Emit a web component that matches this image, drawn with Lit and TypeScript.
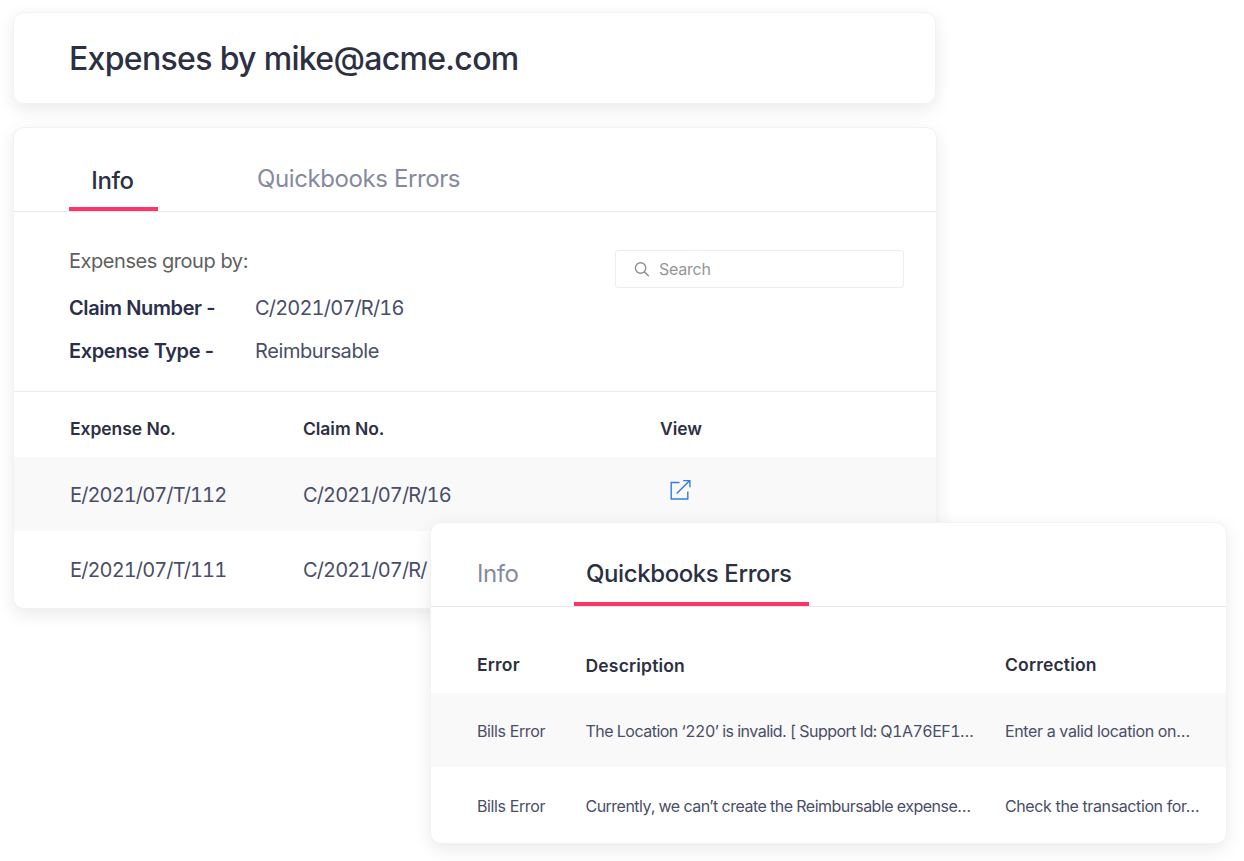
import { css, html, LitElement, svg } from "lit";
import { customElement, property } from "lit/decorators.js";
import { classMap } from "lit/directives/class-map.js";

interface Expense {
  expenseNo: string;
  claimNo: string;
}

interface BillError {
  error: string;
  description: string;
  correction: string;
}

const cardStyles = css`
  :host {
    display: block;
    box-sizing: border-box;
    background: #fff;
    border: 1px solid #f2f2f2;
    border-radius: 11px;
    box-shadow: 0 5px 18px rgba(0, 0, 0, 0.085);
    overflow: hidden;
  }

  .tabs {
    display: flex;
    box-sizing: border-box;
    height: 84px;
    border-bottom: 1px solid #e8e8ea;
  }

  .tab {
    box-sizing: border-box;
    height: 83px;
    font-size: 24px;
    line-height: 24px;
    font-weight: 400;
    letter-spacing: -0.4px;
    color: #858a9e;
    white-space: nowrap;
  }

  .tab.active {
    font-weight: 500;
    color: #2c3043;
    border-bottom: 4px solid #ff3366;
  }

  .row {
    display: grid;
    align-items: center;
    box-sizing: border-box;
    color: #494e68;
    white-space: nowrap;
  }

  .row.shaded {
    padding-top: 2px;
    background: #f9f9f9;
  }

  .row.head {
    font-size: 17.5px;
    font-weight: 600;
    color: #2c3043;
  }
`;

@customElement("expenses-card")
export class ExpensesCard extends LitElement {
  @property({ type: Array }) expenses: Expense[] = [];

  static styles = [
    cardStyles,
    css`
      .tab.info {
        width: 89px;
        margin-left: 55px;
        padding: 41px 2px 0 0;
        text-align: center;
      }

      .tab.errors {
        margin-left: 99px;
        padding-top: 39px;
      }

      .summary {
        display: flex;
        justify-content: space-between;
        box-sizing: border-box;
        height: 180px;
        padding: 38px 32px 0 55px;
        border-bottom: 1px solid #ececee;
      }

      .caption {
        font-size: 20px;
        line-height: 22px;
        letter-spacing: -0.45px;
        color: #5f5f5f;
      }

      .fields {
        display: grid;
        grid-template-columns: 186px auto;
        row-gap: 19px;
        margin-top: 24px;
        font-size: 20px;
        line-height: 24px;
        letter-spacing: -0.4px;
        white-space: nowrap;
      }

      .label {
        font-weight: 600;
        color: #2b2f4c;
      }

      .value {
        color: #494e68;
      }

      .value.code {
        font-variant-numeric: tabular-nums;
        letter-spacing: -0.82px;
      }

      .search {
        display: flex;
        align-items: center;
        box-sizing: border-box;
        width: 289px;
        height: 38px;
        padding-left: 18px;
        border: 1px solid #ededed;
        border-radius: 3px;
        font-size: 16px;
        letter-spacing: -0.25px;
        color: #959595;
      }

      .search svg {
        margin-right: 9px;
      }

      .row {
        grid-template-columns: 233px 357px auto;
        height: 74px;
        padding-left: 56px;
        font-size: 20px;
        font-variant-numeric: tabular-nums;
        letter-spacing: -0.88px;
      }

      .row.head {
        height: 65px;
        padding-top: 8px;
        font-variant-numeric: normal;
        letter-spacing: -0.05px;
      }

      .row.last {
        height: 77px;
      }

      .open {
        display: block;
        margin: -10px 0 0 8px;
      }
    `,
  ];

  render() {
    return html`
      <div class="tabs">
        <div class="tab info active">Info</div>
        <div class="tab errors">Quickbooks Errors</div>
      </div>
      <div class="summary">
        <div>
          <div class="caption">Expenses group by:</div>
          <div class="fields">
            <span class="label">Claim Number -</span>
            <span class="value code">C/2021/07/R/16</span>
            <span class="label">Expense Type -</span>
            <span class="value">Reimbursable</span>
          </div>
        </div>
        <div class="search">
          <svg width="16" height="16" viewBox="0 0 16 16" fill="none" stroke="#8f8f8f" stroke-width="1.4">
            <circle cx="6.6" cy="7" r="5.2" />
            <path d="M10.4 10.8L14.8 15.2" />
          </svg>
          <span>Search</span>
        </div>
      </div>
      <div class="row head">
        <span>Expense No.</span>
        <span>Claim No.</span>
        <span>View</span>
      </div>
      ${this.expenses.map(
        (expense, i) => html`
          <div class=${classMap({ row: true, shaded: i % 2 === 0, last: i === this.expenses.length - 1 })}>
            <span>${expense.expenseNo}</span>
            <span>${expense.claimNo}</span>
            <svg class="open" width="24" height="24" viewBox="0 0 24 24" fill="none" stroke="#2f7de6" stroke-width="1.4">
              ${svg`<path d="M11.5 4.5H3.2V21H19.8V13.6" /><path d="M8.7 15.4L21.8 2.6M15.2 2.6H21.9V9.2" />`}
            </svg>
          </div>
        `
      )}
    `;
  }
}

@customElement("errors-card")
export class ErrorsCard extends LitElement {
  @property({ type: Array }) errors: BillError[] = [];

  static styles = [
    cardStyles,
    css`
      .tab {
        padding-top: 39px;
      }

      .tab.info {
        width: 97px;
        margin-left: 46px;
      }

      .tab.errors {
        width: 235px;
        padding-left: 12px;
      }

      .row {
        grid-template-columns: 108.5px 419.5px auto;
        height: 74px;
        padding-left: 46px;
        font-size: 16px;
        letter-spacing: -0.39px;
      }

      .row.head {
        height: 86px;
        padding-top: 28px;
        letter-spacing: 0.18px;
      }

      .row.last {
        height: 77px;
      }

      .description {
        font-variant-numeric: tabular-nums;
        letter-spacing: -0.52px;
      }

      .row.head .description {
        padding-top: 2px;
        letter-spacing: 0.18px;
      }
    `,
  ];

  render() {
    return html`
      <div class="tabs">
        <div class="tab info">Info</div>
        <div class="tab errors active">Quickbooks Errors</div>
      </div>
      <div class="row head">
        <span>Error</span>
        <span class="description">Description</span>
        <span>Correction</span>
      </div>
      ${this.errors.map(
        (item, i) => html`
          <div class=${classMap({ row: true, shaded: i % 2 === 0, last: i === this.errors.length - 1 })}>
            <span>${item.error}</span>
            <span class="description">${item.description}</span>
            <span>${item.correction}</span>
          </div>
        `
      )}
    `;
  }
}

@customElement("app-root")
export class AppRoot extends LitElement {
  expenses: Expense[] = [
    { expenseNo: "E/2021/07/T/112", claimNo: "C/2021/07/R/16" },
    { expenseNo: "E/2021/07/T/111", claimNo: "C/2021/07/R/" },
  ];

  errors: BillError[] = [
    {
      error: "Bills Error",
      description: "The Location ‘220’ is invalid. [ Support Id: Q1A76EF1…",
      correction: "Enter a valid location on…",
    },
    {
      error: "Bills Error",
      description: "Currently, we can’t create the Reimbursable expense…",
      correction: "Check the transaction for…",
    },
  ];

  static styles = css`
    :host {
      display: block;
      position: relative;
      box-sizing: border-box;
      height: 861px;
      padding: 12px 0 0 13px;
      background: #fff;
      font-family: Inter, "Liberation Sans", sans-serif;
      overflow: hidden;
    }

    .title {
      display: flex;
      align-items: center;
      box-sizing: border-box;
      width: 923px;
      height: 92px;
      margin-bottom: 23px;
      padding-left: 55px;
      border: 1px solid #f2f2f2;
      border-radius: 11px;
      box-shadow: 0 5px 18px rgba(0, 0, 0, 0.085);
      font-size: 32px;
      font-weight: 500;
      letter-spacing: -0.68px;
      color: #2c3043;
    }

    .expenses {
      width: 924px;
      height: 482px;
    }

    /* the errors panel floats over the corner of the expenses card */
    .errors {
      position: absolute;
      left: 430px;
      top: 522px;
      width: 797px;
      height: 322px;
    }
  `;

  render() {
    return html`
      <div class="title">Expenses by mike@acme.com</div>
      <expenses-card class="expenses" .expenses=${this.expenses}></expenses-card>
      <errors-card class="errors" .errors=${this.errors}></errors-card>
    `;
  }
}
